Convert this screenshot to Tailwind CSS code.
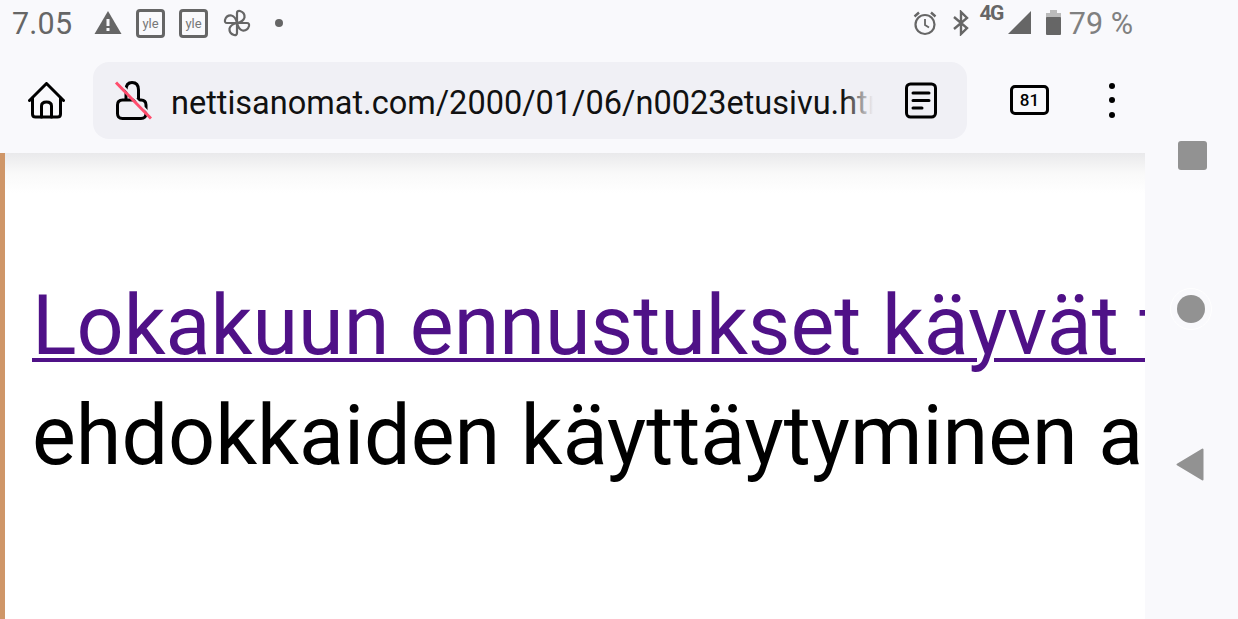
<!DOCTYPE html>
<html lang="en">
<head>
<meta charset="UTF-8">
<title>Nettisanomat</title>
<script src="https://cdn.jsdelivr.net/npm/@tailwindcss/browser@4"></script>
</head>
<body class="bg-white overflow-hidden font-['Roboto',sans-serif]">
<div class="flex w-[1238px] h-[619px] overflow-hidden">
  <div class="w-[1145px] h-full flex flex-col shrink-0">
    <!-- status bar -->
    <div class="h-[50px] bg-[#f9f9fc] flex items-center pl-[12px] pr-[12px] pb-[4px] text-[#666666] shrink-0">
      <span class="text-[30.5px] leading-none w-[62px] tracking-[0.2px] mt-[2px]">7.05</span>
      <svg class="ml-[20px] w-[28px] h-[26px]" viewBox="0 0 28 26"><path d="M14 1 L27.500 24 H0.500 Z" fill="#666"/><rect x="12.500" y="9" width="3" height="7" fill="#f9f9fc"/><rect x="12.500" y="18" width="3" height="3" fill="#f9f9fc"/></svg>
      <div class="ml-[14px] w-[29px] h-[29px] border-[3px] border-[#666] rounded-[4px] flex items-center justify-center text-[13px] leading-none text-[#777]">yle</div>
      <div class="ml-[14px] w-[29px] h-[29px] border-[3px] border-[#666] rounded-[4px] flex items-center justify-center text-[13px] leading-none text-[#777]">yle</div>
      <svg class="ml-[15px] w-[28px] h-[28px]" viewBox="0 0 28 28" fill="none" stroke="#666" stroke-width="2.2" stroke-linejoin="round">
        <path d="M14 14 V4 Q14 1.500 17 2 Q22 3.500 21.500 8.500 Q20.500 12.500 14 14 Z"/>
        <path d="M14 14 V4 Q14 1.500 17 2 Q22 3.500 21.500 8.500 Q20.500 12.500 14 14 Z" transform="rotate(90 14 14)"/>
        <path d="M14 14 V4 Q14 1.500 17 2 Q22 3.500 21.500 8.500 Q20.500 12.500 14 14 Z" transform="rotate(180 14 14)"/>
        <path d="M14 14 V4 Q14 1.500 17 2 Q22 3.500 21.500 8.500 Q20.500 12.500 14 14 Z" transform="rotate(270 14 14)"/>
      </svg>
      <div class="ml-[24px] w-[8px] h-[8px] rounded-full bg-[#666]"></div>
      <div class="ml-auto flex items-center">
        <svg class="w-[26px] h-[26px]" viewBox="0 0 26 26" fill="none" stroke="#666" stroke-width="2.2"><circle cx="13" cy="14.500" r="9.500"/><path d="M13 9v6l4 2.500" stroke-width="1.800"/><path d="M2.500 6.500 L7 2.500 M23.500 6.500 L19 2.500" stroke-width="2.400"/></svg>
        <svg class="ml-[14px] w-[18px] h-[26px]" viewBox="0 0 18 26" fill="none" stroke="#666" stroke-width="2.400"><path d="M2 7 L15 18 L9 24 V2 L15 8 L2 19"/></svg>
        <span class="ml-[9px] mb-[19px] text-[21px] leading-none font-bold tracking-[-1.500px] text-[#666]">4G</span>
        <svg class="ml-[5px] w-[23px] h-[23px] mb-[1px]" viewBox="0 0 23 23"><path d="M23 0 V23 H0 Z" fill="#666"/></svg>
        <svg class="ml-[15px] w-[15px] h-[25px] mb-[2px]" viewBox="0 0 15 25"><rect x="4" y="0" width="7" height="4" fill="#bbb"/><rect x="0" y="3" width="15" height="5" fill="#bbb"/><rect x="0" y="7" width="15" height="18" rx="1" fill="#666"/></svg>
        <span class="ml-[8px] text-[30.5px] leading-none text-[#808080] mt-[2px]">79 %</span>
      </div>
    </div>
    <!-- toolbar -->
    <div class="h-[103px] bg-[#f9f9fc] flex items-center shrink-0 z-10 pb-[3px]">
      <svg class="ml-[28px] w-[37px] h-[37px]" viewBox="0 0 37 37" fill="none" stroke="#000" stroke-width="3" stroke-linejoin="round" stroke-linecap="round"><path d="M1.500 18.500 L18.500 1.500 L35.500 18.500"/><path d="M4.500 16 V32 Q4.500 35 7.500 35 H29.500 Q32.500 35 32.500 32 V16"/><path d="M13.500 35 V24 Q13.500 20 18.500 20 Q23.500 20 23.500 24 V35"/></svg>
      <div class="ml-[28px] w-[874px] h-[77px] rounded-[16px] bg-[#f0f0f5] flex items-center relative">
        <svg class="ml-[21px] w-[38px] h-[40px] shrink-0" viewBox="0 0 38 40" fill="none">
          <path d="M12 20 H27 Q32 20 32 25 V33.500 Q32 38.500 27 38.500 H8.500 Q3.500 38.500 3.500 33.500 V25 Q3.500 20 8.500 20 Z M12 20 V10 Q12 2.500 18 2.500 Q24.500 2.500 24.500 10 V20" stroke="#000" stroke-width="3"/>
          <path d="M4 1 L39 37" stroke="#f0f0f5" stroke-width="2"/>
          <path d="M2 2.500 L37 38.500" stroke="#ff4d6d" stroke-width="3"/>
        </svg>
        <div class="ml-[19px] mt-[6px] w-[702px] overflow-hidden whitespace-nowrap text-[32.5px] leading-none text-[#111] relative">nettisanomat.com/2000/01/06/n0023etusivu.htm<div class="absolute right-0 top-0 bottom-0 w-[30px] bg-gradient-to-r from-transparent to-[#f0f0f5]"></div></div>
        <svg class="absolute left-[812px] top-[20px] w-[32px] h-[37px]" viewBox="0 0 32 37" fill="none" stroke="#000" stroke-width="3" stroke-linecap="round"><rect x="1.500" y="2" width="29" height="33" rx="4"/><path d="M8 11 H24 M8 18.500 H24 M8 26 H17"/></svg>
      </div>
      <div class="ml-[43px] w-[39px] h-[30px] border-[3px] border-black rounded-[5px] flex items-center justify-center text-[17px] font-medium leading-none text-black">81</div>
      <div class="ml-[60px] flex flex-col gap-[8.500px]">
        <div class="w-[6px] h-[6px] rounded-full bg-black"></div>
        <div class="w-[6px] h-[6px] rounded-full bg-black"></div>
        <div class="w-[6px] h-[6px] rounded-full bg-black"></div>
      </div>
    </div>
    <!-- page -->
    <div class="flex-1 relative overflow-hidden bg-white">
      <div class="absolute top-0 left-0 right-0 h-[40px] bg-gradient-to-b from-[#e9e9eb] via-[#f9f9f9] to-white"></div>
      <div class="absolute top-0 left-0 w-[5px] h-full bg-[#cf9668]"></div>
      <div class="pt-[118px] pl-[32px] whitespace-nowrap text-[82.7px] leading-[110px] text-black relative">
        <a class="block text-[#4f1187] underline decoration-[4px] underline-offset-[4px]">Lokakuun ennustukset käyvät t</a>
        <p>ehdokkaiden käyttäytyminen a</p>
      </div>
    </div>
  </div>
  <!-- navigation bar -->
  <div class="flex-1 bg-[#f9f9fc] relative">
    <div class="absolute top-[141px] left-[33px] w-[29px] h-[29px] rounded-[3px] bg-[#929292]"></div>
    <div class="absolute top-[288px] left-[25px] w-[42px] h-[42px] rounded-full border border-white flex items-center justify-center"><div class="w-[28px] h-[28px] rounded-full bg-[#929292]"></div></div>
    <svg class="absolute top-[448px] left-[31px] w-[28px] h-[33px]" viewBox="0 0 28 33"><path d="M26.500 1.500 V31.500 L1.500 16.500 Z" fill="#929292" stroke="#929292" stroke-width="2" stroke-linejoin="round"/></svg>
  </div>
</div>
</body>
</html>
